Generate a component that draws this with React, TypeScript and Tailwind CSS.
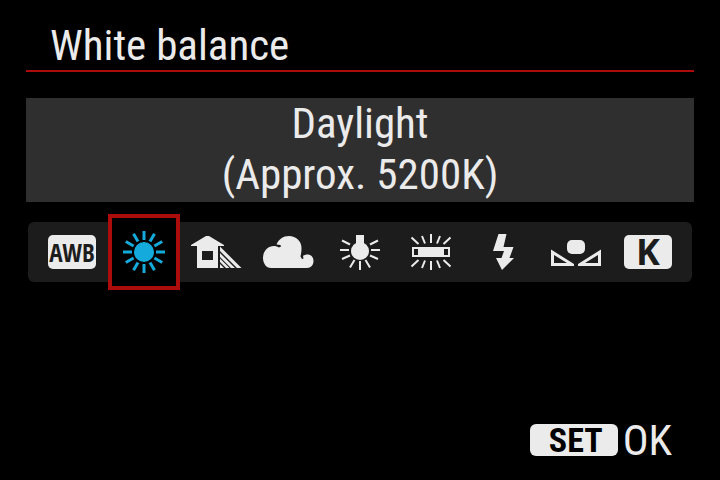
import { useState } from "react";
import type { ReactNode } from "react";

type Mode = { id: string; name: string; detail: string; icon: ReactNode };

const badge =
  "flex h-[34px] w-12 items-center justify-center rounded-[5px] bg-[#ebebeb] font-bold leading-none text-[#1c1c1c]";

function Glyph({ children }: { children: ReactNode }) {
  return (
    <svg viewBox="0 0 72 60" className="h-[60px] w-[72px]" fill="currentColor" aria-hidden="true">
      {children}
    </svg>
  );
}

const sunAngles = [0, 30, 60, 90, 120, 150, 180, 210, 240, 270, 300, 330];

const modes: Mode[] = [
  {
    id: "awb",
    name: "Auto",
    detail: "(Ambience priority)",
    icon: (
      <span className={`${badge} font-['Open_Sans_Condensed','Roboto_Condensed',sans-serif] text-[25px]`}>AWB</span>
    ),
  },
  {
    id: "daylight",
    name: "Daylight",
    detail: "(Approx. 5200K)",
    icon: (
      <Glyph>
        <circle cx="36" cy="30" r="10" />
        {sunAngles.map((a) => (
          <path key={a} d="M48 30h9" stroke="currentColor" strokeWidth="3" transform={`rotate(${a} 36 30)`} />
        ))}
      </Glyph>
    ),
  },
  {
    id: "shade",
    name: "Shade",
    detail: "(Approx. 7000K)",
    icon: (
      <Glyph>
        <path fillRule="evenodd" d="M26 14h3L44 23V24H38V46H17V24H11V23ZM22 29V38H33V29Z" />
        <path d="M40 24.500L61.500 46H57L40 29ZM40 31L55 46H51L40 35ZM40 36.500L49.500 46H46L40 40ZM40 42L44 46H40Z" />
      </Glyph>
    ),
  },
  {
    id: "cloudy",
    name: "Cloudy",
    detail: "(Approx. 6000K)",
    icon: (
      <Glyph>
        <path d="M19 46C14 46 11 41 11 36C11 29 16 24 22 24C24 24 25 24.500 27 25.500L29 24.500L28.500 23L24.500 22.500C27 17 31 14 37 14C44 14 49.500 19 49.500 26C49.500 30 49 32 48.500 34.500L50 37L51.500 36.500L51 34C52 33 54 32.500 55.500 32.500C59 32.500 61.500 35 61.500 39C61.500 43 59 46 55 46Z" />
      </Glyph>
    ),
  },
  {
    id: "tungsten",
    name: "Tungsten light",
    detail: "(Approx. 3200K)",
    icon: (
      <Glyph>
        <path d="M32 13h8v9h-8z" />
        <circle cx="36" cy="29" r="9" />
        <path
          stroke="currentColor"
          strokeWidth="2"
          d="M16 28h9M47 28h9M36 39v9M18 18.500l8 4M54 18.500l-8 4M18 37l8-3.500M54 37l-8-3.500M26 45.500l4.500-7.500M46 45.500l-4.500-7.500"
        />
      </Glyph>
    ),
  },
  {
    id: "fluorescent",
    name: "White fluorescent light",
    detail: "(Approx. 4000K)",
    icon: (
      <Glyph>
        <path fillRule="evenodd" d="M16 25H54V35H16ZM18 27V33H22V27ZM48 27V33H52V27Z" />
        <path
          stroke="currentColor"
          strokeWidth="2"
          d="M35 12v9M26 14l3 7.500M44 14l-3 7.500M15.500 15.500l7 6.500M54.500 15.500l-7 6.500M35 39v9M29 38.500l-3 7.500M41 38.500l3 7.500M22.500 38l-7 6.500M47.500 38l7 6.500"
        />
      </Glyph>
    ),
  },
  {
    id: "flash",
    name: "Flash",
    detail: "(Approx. 6000K)",
    icon: (
      <Glyph>
        <path d="M30.500 12H38.500L35.500 25H45.500L41.500 36H46L34 48L28 36H33.500L36 29H25Z" />
      </Glyph>
    ),
  },
  {
    id: "custom",
    name: "Custom",
    detail: "(2000K-10000K)",
    icon: (
      <Glyph>
        <rect x="27" y="18" width="18" height="14" rx="5" />
        <path
          fillRule="evenodd"
          d="M11 27.500L34 42V44H11ZM14 33V41H27ZM61 27.500L38 42V44H61ZM58 33V41H45Z"
        />
      </Glyph>
    ),
  },
  {
    id: "kelvin",
    name: "Color temperature",
    detail: "(Approx. 5200K)",
    icon: <span className={`${badge} font-['Open_Sans','Noto_Sans',sans-serif] text-[36px]`}>K</span>,
  },
];

export default function App() {
  const [selected, setSelected] = useState("daylight");
  const mode = modes.find((m) => m.id === selected) ?? modes[1];

  return (
    <main className="flex min-h-screen flex-col bg-black px-[26px] py-5 font-['Roboto_Condensed','DejaVu_Sans_Condensed',sans-serif] text-[43px] text-[#ebebeb]">
      <h1 className="border-b-2 border-[#ac0c0c] px-6 leading-[50px]">White balance</h1>

      <section className="mt-[26px] bg-[#2f2f2f] pb-0.5 text-center leading-[51px]" aria-live="polite">
        <p>{mode.name}</p>
        <p>{mode.detail}</p>
      </section>

      <fieldset className="mx-0.5 mt-5 flex h-[60px] min-w-0 items-center rounded-md bg-[#1c1c1c] px-2">
        {modes.map((m) => (
          <label key={m.id} className="-my-2 grid h-[76px] flex-1 cursor-pointer place-items-center">
            <input
              type="radio"
              name="white-balance"
              aria-label={m.name}
              checked={m.id === selected}
              onChange={() => setSelected(m.id)}
              className="peer col-start-1 row-start-1 h-[76px] w-full appearance-none checked:border-4 checked:border-[#ac0c0c] checked:bg-black"
            />
            <span className="col-start-1 row-start-1 peer-checked:text-[#14aadc]">{m.icon}</span>
          </label>
        ))}
      </fieldset>

      <footer className="mt-auto flex justify-end pr-[22px]">
        <button type="button" className="flex items-center gap-[5px] leading-10">
          <span className="flex h-8 w-[88px] items-center justify-center rounded-md bg-[#ebebeb] pl-1 text-[34px] font-bold leading-none text-black">
            SET
          </span>
          OK
        </button>
      </footer>
    </main>
  );
}
